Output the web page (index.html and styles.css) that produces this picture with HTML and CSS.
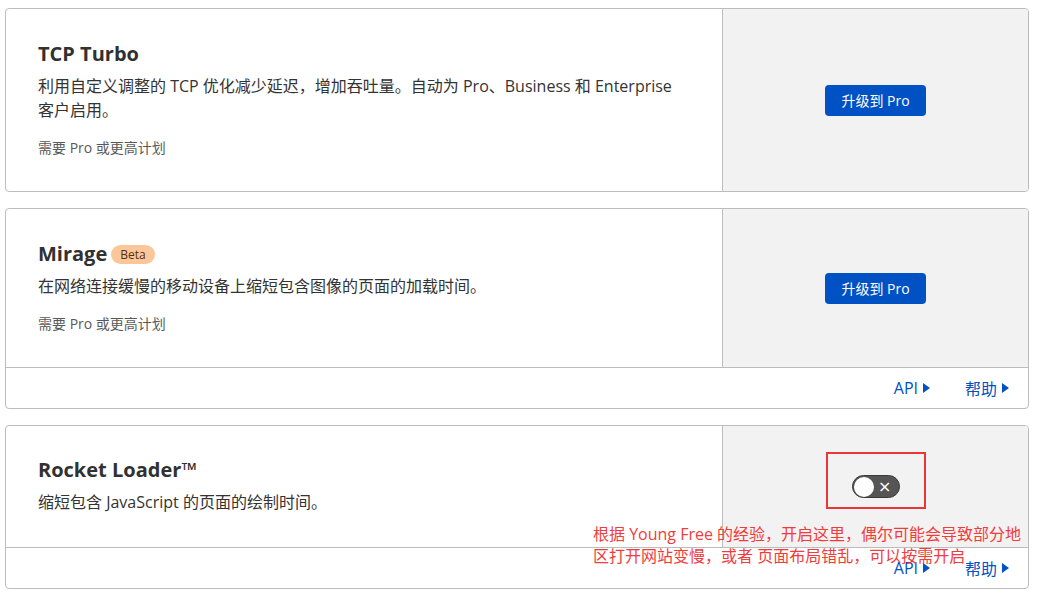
FILE: index.html
```html
<!DOCTYPE html>
<html lang="zh-CN">
<head>
  <meta charset="UTF-8">
  <title>速度优化</title>
  <meta name="viewport" content="width=device-width,initial-scale=1">
  <link rel="stylesheet" href="styles.css">
</head>
<body>
  <main class="cards">

    <!-- TCP Turbo -->
    <section class="card">
      <div class="card-body">
        <div class="card-info">
          <h3 class="card-title">TCP Turbo</h3>
          <p class="card-desc">利用自定义调整的 TCP 优化减少延迟，增加吞吐量。自动为 Pro、Business 和 Enterprise 客户启用。</p>
          <p class="card-note">需要 Pro 或更高计划</p>
        </div>
        <div class="card-control">
          <button class="btn-upgrade">升级到 Pro</button>
        </div>
      </div>
    </section>

    <!-- Mirage -->
    <section class="card">
      <div class="card-body">
        <div class="card-info">
          <h3 class="card-title">Mirage <span class="badge">Beta</span></h3>
          <p class="card-desc">在网络连接缓慢的移动设备上缩短包含图像的页面的加载时间。</p>
          <p class="card-note">需要 Pro 或更高计划</p>
        </div>
        <div class="card-control">
          <button class="btn-upgrade">升级到 Pro</button>
        </div>
      </div>
      <div class="card-footer">
        <a href="#" class="more">API</a>
        <a href="#" class="more">帮助</a>
      </div>
    </section>

    <!-- Rocket Loader -->
    <section class="card card-annotated">
      <div class="card-body">
        <div class="card-info">
          <h3 class="card-title">Rocket Loader™</h3>
          <p class="card-desc">缩短包含 JavaScript 的页面的绘制时间。</p>
        </div>
        <div class="card-control">
          <span class="mark">
            <span class="toggle" role="switch" aria-checked="false"><span class="knob"></span><span class="off">×</span></span>
          </span>
        </div>
      </div>
      <div class="card-footer">
        <a href="#" class="more">API</a>
        <a href="#" class="more">帮助</a>
      </div>
      <p class="note">根据 Young Free 的经验，开启这里，偶尔可能会导致部分地<br>区打开网站变慢，或者 页面布局错乱，可以按需开启</p>
    </section>

  </main>
</body>
</html>
```

FILE: styles.css
```css
*{box-sizing:border-box}
body{margin:0;padding:8px 9px 0 5px;background:#fff;color:#333;
  font-family:"Open Sans","Noto Sans CJK SC",sans-serif}
.cards{display:flex;flex-direction:column;gap:16px}

/* card */
.card{border:1px solid #bcbcbc;border-radius:4px;background:#fff;overflow:hidden;position:relative}
.card-body{display:grid;grid-template-columns:1fr 306px}
.card-info{padding:31px 33px 33px 32px}
.card-annotated .card-info{padding-top:30px}
.card-title{margin:0;font-size:20px;line-height:28px;font-weight:700;color:#313131;display:flex;align-items:center;gap:4px}
.card-desc{margin:6px 0 0;font-size:16px;line-height:24px;max-width:650px}
.card-note{margin:16px 0 0;font-size:14px;line-height:20px;color:#595959}
.card-control{background:#f2f2f2;border-left:1px solid #bcbcbc;display:flex;align-items:center;justify-content:center}

/* beta badge */
.badge{display:inline-block;padding:0 9px;height:19px;line-height:19px;border-radius:10px;
  background:#fbc79a;color:#5a2e0c;font-size:12px;font-weight:400}

/* upgrade button */
.btn-upgrade{height:31px;padding:0 16px;border:none;border-radius:4px;background:#0051c3;color:#fff;
  font:inherit;font-size:14px;cursor:pointer}

/* footer links */
.card-footer{border-top:1px solid #bcbcbc;height:41px;display:flex;align-items:center;justify-content:flex-end;gap:35px;padding-right:19px}
.more{color:#0051c3;text-decoration:none;font-size:16px;display:flex;align-items:center;gap:5px}
.more::after{content:"";border-left:7px solid #0051c3;border-top:5.5px solid transparent;border-bottom:5.5px solid transparent}

/* toggle, boxed in red by the annotation (box sits a bit high) */
.mark{display:inline-block;padding:21px 24px 9px;margin-top:-12px;border:2px solid #ee3535}
.toggle{display:flex;align-items:center;justify-content:space-between;width:48px;height:23px;border-radius:12px;
  background:#555;border:1px solid #3a3a3a;padding:0 7px 0 1px}
.knob{width:20px;height:20px;border-radius:50%;background:#fff}
.off{color:#fff;font-size:16px;line-height:1;font-family:"DejaVu Sans",sans-serif}

/* red annotation over the last card */
.note{position:absolute;left:587px;top:97px;margin:0;font-size:16px;line-height:22px;color:#f23b3b;white-space:nowrap}
```
